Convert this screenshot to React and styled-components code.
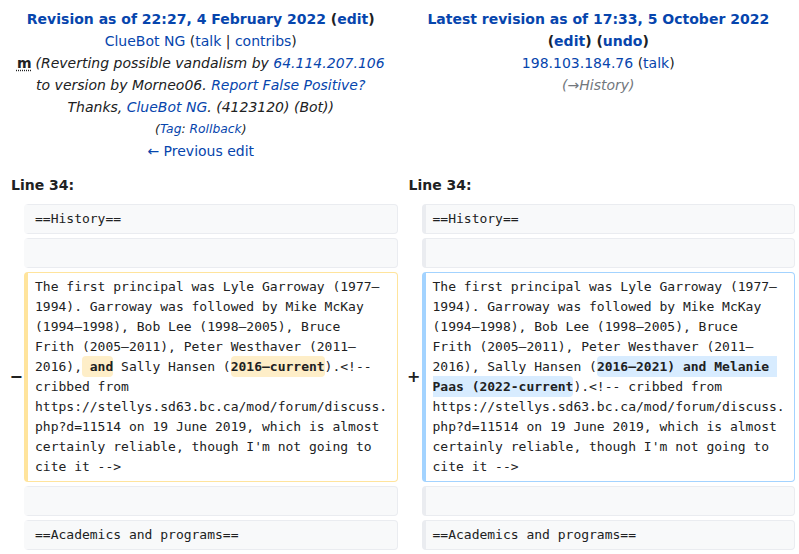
import React from 'react';
import styled, {createGlobalStyle} from 'styled-components';

const GlobalStyle = createGlobalStyle`
    body{
        margin:0;
        font-family:"DejaVu Sans", "Liberation Sans", sans-serif;
        font-size:14px;
        color:#202122;
        background:#fff;
    }
`;

const DiffTable = styled.table`
    width:799px;
    table-layout:fixed;
    border-collapse:separate;
    border-spacing:4px;
`;

const Col = styled.col`
    width:${props => props.$width || 'auto'};
`;

const TitleCell = styled.td`
    vertical-align:top;
    text-align:center;
    padding:4px 7px;
    line-height:22px;
`;

const TitleLine = styled.div`
    font-weight:${props => props.$bold ? 'bold' : 'normal'};
`;

const Link = styled.a`
    color:#0645ad;
    text-decoration:none;
`;

const Comment = styled.span`
    font-style:italic;
    color:${props => props.$auto ? '#72777d' : '#202122'};
`;

const Minor = styled.abbr`
    font-weight:bold;
    text-decoration:underline dotted;
    text-underline-offset:2px;
    margin-right:4px;
`;

const Tags = styled.div`
    font-size:12.3px;
    font-style:italic;
`;

const LineNo = styled.td`
    font-weight:bold;
    padding:4px 7px;
    line-height:22px;
    text-align:left;
`;

const Marker = styled.td`
    text-align:right;
    vertical-align:middle;
    font-weight:bold;
    font-size:16px;
    line-height:1.2;
    letter-spacing:-3px;
    padding:0;
`;

const borders = {
    context:'#eaecf0',
    deleted:'#ffe49c',
    added:'#a3d3ff',
};

const Content = styled.td`
    vertical-align:top;
    font-family:"DejaVu Sans Mono", "Liberation Mono", monospace;
    font-size:13px;
    line-height:20px;
    white-space:break-spaces;
    word-wrap:break-word;
    overflow-wrap:break-word;
    padding:4px 7px;
    border-style:solid;
    border-width:1px 1px 1px 4px;
    border-radius:4px;
    border-color:${props => borders[props.$kind]};
    border-left-color:${props => props.$kind === 'context' && props.$side === 'left' ? '#f8f9fa' : borders[props.$kind]};
    background:${props => props.$kind === 'context' ? '#f8f9fa' : '#fff'};
    color:#202122;
`;

const Change = styled.span`
    font-weight:bold;
    border-radius:4px;
    padding:3px 0;
    background:${props => props.$kind === 'added' ? '#d8ecff' : '#feeec8'};
`;

const ContextRow = ({text}) => (
    <tr>
        <td></td>
        <Content $kind="context" $side="left"><div>{text || <br/>}</div></Content>
        <td></td>
        <Content $kind="context" $side="right"><div>{text || <br/>}</div></Content>
    </tr>
);

const head = 'The first principal was Lyle Garroway (1977–1994). Garroway was followed by Mike McKay (1994–1998), Bob Lee (1998–2005), Bruce Frith (2005–2011), Peter Westhaver (2011–2016),';
const tail = '.<!-- cribbed from https://stellys.sd63.bc.ca/mod/forum/discuss.php?d=11514 on 19 June 2019, which is almost certainly reliable, though I\'m not going to cite it -->';

const App = () => (
    <>
        <GlobalStyle/>
        <DiffTable>
            <colgroup>
                <Col $width="16px"/>
                <Col/>
                <Col $width="16px"/>
                <Col/>
            </colgroup>
            <tbody>
                <tr>
                    <TitleCell colSpan={2}>
                        <TitleLine $bold><Link href="#">Revision as of 22:27, 4 February 2022</Link> (<Link href="#">edit</Link>)</TitleLine>
                        <TitleLine><Link href="#">ClueBot NG</Link> (<Link href="#">talk</Link> | <Link href="#">contribs</Link>)</TitleLine>
                        <TitleLine>
                            <Minor title="This is a minor edit">m</Minor>
                            <Comment>(Reverting possible vandalism by <Link href="#">64.114.207.106</Link> to version by Morneo06. <Link href="#">Report False Positive?</Link> Thanks, <Link href="#">ClueBot NG</Link>. (4123120) (Bot))</Comment>
                        </TitleLine>
                        <Tags>(<Link href="#">Tag</Link>: <Link href="#">Rollback</Link>)</Tags>
                        <TitleLine><Link href="#">← Previous edit</Link></TitleLine>
                    </TitleCell>
                    <TitleCell colSpan={2}>
                        <TitleLine $bold><Link href="#">Latest revision as of 17:33, 5 October 2022</Link> (<Link href="#">edit</Link>) (<Link href="#">undo</Link>)</TitleLine>
                        <TitleLine><Link href="#">198.103.184.76</Link> (<Link href="#">talk</Link>)</TitleLine>
                        <TitleLine><Comment $auto>(→History)</Comment></TitleLine>
                    </TitleCell>
                </tr>
                <tr>
                    <LineNo colSpan={2}>Line 34:</LineNo>
                    <LineNo colSpan={2}>Line 34:</LineNo>
                </tr>
                <ContextRow text="==History=="/>
                <ContextRow/>
                <tr>
                    <Marker>−</Marker>
                    <Content $kind="deleted"><div>{head}<Change $kind="deleted"> and</Change> Sally Hansen (<Change $kind="deleted">2016–current</Change>){tail}</div></Content>
                    <Marker>+</Marker>
                    <Content $kind="added"><div>{head} Sally Hansen (<Change $kind="added">2016–2021) and Melanie Paas (2022-current</Change>){tail}</div></Content>
                </tr>
                <ContextRow/>
                <ContextRow text="==Academics and programs=="/>
            </tbody>
        </DiffTable>
    </>
);

export default App;
